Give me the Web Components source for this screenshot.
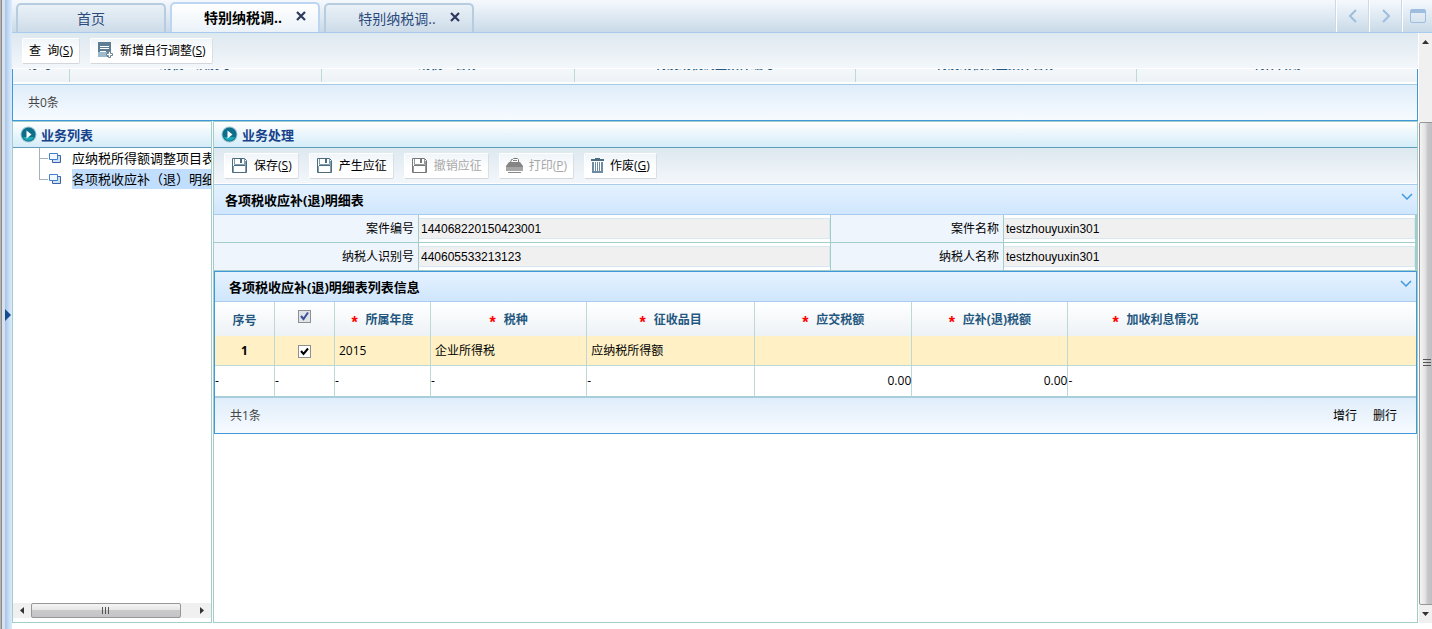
<!DOCTYPE html>
<html lang="zh-CN">
<head>
<meta charset="utf-8">
<title>特别纳税调整</title>
<style>
html, body { height: 100%; margin: 0; }
body { font: 12px/16px "Open Sans", "Noto Sans CJK SC", sans-serif; color: #000; background: #fff; overflow: hidden; }
</style>
</head>
<body>
<tax-app></tax-app>
<script>
const define = (name, html, setup) => customElements.define(name, class extends HTMLElement {
  constructor() {
    super();
    const t = document.createElement('template');
    t.innerHTML = html;
    this.attachShadow({ mode: 'open' }).append(t.content.cloneNode(true));
  }
  connectedCallback() { if (setup) setup(this, this.shadowRoot); }
});

const icons = {
  add: '<svg width="17" height="17" viewBox="0 0 17 17"><path fill="#5f7d92" d="M1 0h13v10h-3v5H1z"/><path fill="#9db9cc" d="M1 10h9v5H1z"/><path stroke="#fff" d="M3 4.500h9M3 6.500h9M3 9.500h6"/><path fill="#fff" stroke="#6d8494" d="M11.500 9.500h2v2h2v2h-2v2h-2v-2h-2v-2h2z"/></svg>',
  save: '<svg width="17" height="17" viewBox="0 0 17 17"><path d="M1.500 1.500h12l2 2v12h-14z" fill="url(#g)" stroke="var(--ic,#4c6b7c)"/><path fill="#fff" d="M4 2h9v6H4zM3 10h11v5H3z"/><path fill="var(--ic,#4c6b7c)" d="M9 2h2v4H9zM3 8h11v1H3z"/><path fill="none" stroke="var(--ic2,#7f9dae)" d="M3.500 2v5.500h10V2M2.500 9v6M14.500 4v11"/></svg>',
  print: '<svg width="17" height="17" viewBox="0 0 17 17"><path fill="#fff" stroke="#777" d="M4.500 5.500l1-3h1l1-1h4l1 1v3"/><path stroke="#888" d="M7 3.500h4"/><path fill="#858585" d="M3 5h11l3 4v5H0V9z"/><path fill="#a5a5a5" d="M0 10h17v4H0z"/><path stroke="#888" d="M2 15.500h13"/></svg>',
  trash: '<svg width="13" height="17" viewBox="0 0 13 17"><path fill="#4d6c80" d="M4 1h5v1h4v2H0V2h4z"/><path fill="#6d8ba1" d="M1 5h11v11H1z"/><path stroke="#fff" d="M3.500 5v9M5.500 5v9M7.500 5v9M9.500 5v9"/></svg>'
};

define('tool-button', `<style>
:host { display: block; }
button { height: 26px; display: flex; align-items: center; gap: 6px; padding: 0 6px; border: 1px solid #fff; border-right-color: #dadfe3; border-bottom-color: #d3d7db; border-radius: 2px; background: linear-gradient(#f0f5f9, #fff 60%); font: inherit; color: #000; white-space: nowrap; }
button:disabled { color: #a8a8a8; --ic: #777; --ic2: #999; }
.i { display: flex; } .i:empty { display: none; }
</style><button type="button"><span class="i"></span><span><slot></slot></span></button>`, (el, r) => {
  r.querySelector('.i').innerHTML = icons[el.getAttribute('icon')] || '';
  r.querySelector('button').disabled = el.hasAttribute('disabled');
});

define('tool-bar', `<style>
:host { display: flex; align-items: center; gap: 10px; height: 35px; padding: 0 10px; background: linear-gradient(#dde8ef, #f3f7fb); border-bottom: 1px solid #fff; box-sizing: content-box; }
</style><slot></slot>`);

define('page-tab', `<style>
:host { display: block; width: 150px; }
div { box-sizing: border-box; height: 29px; display: flex; align-items: center; border: 2px solid #b8cce0; border-bottom: 0; border-radius: 5px 5px 0 0; background: linear-gradient(#eaf1f7, #cddce9); color: #2c4a7c; }
:host([active]) div { height: 30px; background: linear-gradient(#fff, #eaf2f8); border-color: #bcd6f2; color: #000; font-weight: bold; }
a { flex: 1; text-align: center; color: inherit; text-decoration: none; font-size: 14px; line-height: 20px; padding-left: 0; }
:host([closable]) a { padding-left: 18px; }
button { display: none; width: 22px; padding: 0 12px 4px 0; border: 0; background: none; box-sizing: content-box; width: 10px; }
:host([closable]) button { display: block; }
svg { display: block; }
</style><div><a href="#"><slot></slot></a><button type="button" aria-label="关闭"><svg width="10" height="10" viewBox="0 0 10 10"><path stroke="#2d3a5e" stroke-width="2.200" d="M1 1l8 8M9 1l-8 8"/></svg></button></div>`);

define('tab-strip', `<style>
:host { display: flex; align-items: flex-end; justify-content: space-between; height: 32px; border-bottom: 1px solid #a8cbee; background: linear-gradient(#f5f9fd, #c9dae8); }
.tabs { display: flex; align-items: flex-end; gap: 4px; padding-left: 4px; }
.nav { display: flex; align-self: stretch; }
.nav button { width: 33px; padding: 0; border: 0; border-left: 1px solid #fff; box-shadow: -1px 0 #cdd9e5; background: none; display: grid; place-items: center; }
.nav button:last-child { width: 30px; }
svg { fill: none; stroke: #9dbede; stroke-width: 2; }
</style><div class="tabs"><slot></slot></div><div class="nav">
<button type="button" aria-label="向左"><svg width="10" height="14" viewBox="0 0 10 14"><path d="M8 1L2 7l6 6"/></svg></button>
<button type="button" aria-label="向右"><svg width="10" height="14" viewBox="0 0 10 14"><path d="M2 1l6 6-6 6"/></svg></button>
<button type="button" aria-label="窗口"><svg width="16" height="14" viewBox="0 0 16 14"><rect x=".5" y=".5" width="15" height="13" rx="1.500" stroke-width="1"/><path stroke-width="4" d="M1 2h14"/></svg></button></div>`);

define('side-splitter', `<style>
:host { flex: none; width: 12px; display: flex; align-items: center; background: linear-gradient(90deg, #b4b4b4 0 1px, #8a8a8a 1px 2px, #d9e2ec 2px 5px, #a3c4ea 5px, #c8def6 9px, #dcebfb 12px); }
button { width: 12px; height: 20px; padding: 0 0 0 5px; border: 0; background: none; }
svg { display: block; }
</style><button type="button" aria-label="展开"><svg width="6" height="12" viewBox="0 0 6 12"><path fill="#134a90" d="M0 0l6 6-6 6z"/></svg></button>`);

define('page-scrollbar', `<style>
:host { flex: none; width: 13px; display: flex; flex-direction: column; background: #f0f0f0; overflow: hidden; }
.a { height: 18px; display: grid; place-items: center; }
.gap { flex: 13 1 0; } .thumb { flex: 100 1 0; display: grid; place-items: center; border: 1px solid #979797; border-radius: 2px; margin-right: -2px; background: linear-gradient(90deg, #f5f5f5, #e2e2e2 40%, #c6c6ca 60%, #bfbfc3); }
.gap { flex: none; height: 12%; }
svg { display: block; }
</style><div class="a"><svg width="7" height="4"><path fill="#333" d="M0 4l3.500-4L7 4z"/></svg></div><div class="gap"></div><div class="thumb"><svg width="8" height="9"><path stroke="#555" d="M0 .5h8M0 3.500h8M0 6.500h8"/></svg></div><div class="a"><svg width="7" height="4"><path fill="#333" d="M0 0l3.500 4L7 0z"/></svg></div>`);

define('side-scrollbar', `<style>
:host { display: flex; height: 15px; background: #f0f0f0; }
.a { width: 18px; display: grid; place-items: center; }
.thumb { width: 150px; box-sizing: border-box; display: grid; place-items: center; border: 1px solid #979797; border-radius: 2px; background: linear-gradient(#f5f5f5, #e6e6e6 45%, #cacaca 50%, #c4c4c8); }
.gap { flex: 1; }
svg { display: block; }
</style><div class="a"><svg width="4" height="7"><path fill="#333" d="M4 0L0 3.500 4 7z"/></svg></div><div class="thumb"><svg width="9" height="7"><path stroke="#555" d="M.5 0v7M3.500 0v7M6.500 0v7"/></svg></div><div class="gap"></div><div class="a"><svg width="4" height="7"><path fill="#333" d="M0 0l4 3.500L0 7z"/></svg></div>`);

define('case-list', `<style>
:host { display: block; border: 1px solid #3f97dc; border-top: 0; }
.view { height: 13px; overflow: hidden; display: flex; flex-direction: column; justify-content: flex-end; background: #fff; }
table { width: 100%; table-layout: fixed; border-collapse: collapse; flex: none; }
th { height: 33px; box-sizing: border-box; padding: 0 0 1px; font-weight: bold; color: #24577f; border-left: 1px solid #bcd9d5; background: linear-gradient(#fff, #edf2f6); }
th:first-child { border-left: 0; }
.foot { margin-top: 2px; height: 35px; display: flex; align-items: center; padding-left: 15px; border-top: 1px solid #a8cbe6; background: linear-gradient(#dfedfa, #f7fbff); color: #444; }
</style><div class="view"><table><colgroup><col style="width:4%"><col style="width:18%"><col style="width:18%"><col style="width:20%"><col style="width:20%"><col style="width:20%"></colgroup><tr><th>序号</th><th>纳税人识别号</th><th>纳税人名称</th><th>特别纳税调整案件编号</th><th>特别纳税调整案件名称</th><th>制作日期</th></tr></table></div><div class="foot">共0条</div>`);

define('work-panel', `<style>
:host { display: flex; flex-direction: column; min-width: 0; border: 1px solid #a3cdc9; box-sizing: border-box; background: #fff; }
h2 { margin: 0; flex: none; height: 25px; display: flex; align-items: center; gap: 4px; padding-left: 7px; border-bottom: 1px solid #5f9cba; background: linear-gradient(#fff, #d4ecf9); font-size: 13px; line-height: 20px; color: #16428b; }
.body { flex: 1; min-height: 0; display: flex; flex-direction: column; }
svg { display: block; }
</style><h2><svg width="17" height="17" viewBox="0 0 17 17"><circle cx="8.500" cy="8.500" r="8" fill="#9bc4cf"/><circle cx="8.500" cy="8.500" r="7" fill="#0d6d8c"/><path fill="#19a9b5" d="M3 11a6 6 0 0 0 11 0z"/><path fill="#fff" d="M6.500 4.500l5 4-5 4z"/></svg><slot name="title"></slot></h2><div class="body"><slot></slot></div>`);

define('tree-item', `<style>
:host { display: flex; height: 21px; }
.line { flex: none; width: 8px; margin-left: 26px; border-left: 1px solid #a5b0c0; display: flex; }
:host([last]) .line { height: 11px; }
.line::after { content: ""; width: 8px; height: 10px; border-bottom: 1px solid #a5b0c0; }
svg { flex: none; margin: 4px 11px 0 1px; }
a { flex: none; height: 20px; line-height: 20px; font-size: 13px; color: #000; text-decoration: none; white-space: nowrap; }
:host([selected]) a { background: #c1deff; }
</style><span class="line"></span><svg width="12" height="12" viewBox="0 0 12 12"><path fill="#cfe0f5" stroke="#3b64a8" d="M3.500 3.500h8v7h-8z"/><path fill="#f3f8ff" stroke="#3f7fd0" d="M.5 1.500h8v6h-8z"/></svg><a href="#"><slot></slot></a>`);

define('section-bar', `<style>
:host { display: flex; align-items: center; justify-content: space-between; height: 29px; padding: 0 4px 0 11px; border-top: 1px solid #a8cbee; border-bottom: 1px solid #a8cbee; background: linear-gradient(#e5f2ff, #cfe6fd); }
:host([lined]) { border-top: 0; padding-left: 14px; }
h3 { margin: 0; font-size: 13px; line-height: 20px; }
button { padding: 0 0 6px; border: 0; background: none; }
svg { display: block; }
</style><h3><slot></slot></h3><button type="button" aria-label="收起"><svg width="12" height="7" viewBox="0 0 12 7"><path fill="none" stroke="#3f9be0" stroke-width="1.500" d="M1 1l5 5 5-5"/></svg></button>`);

define('case-form', `<style>
:host { display: grid; grid-template-columns: 205px 1fr 173px 1fr; border-right: 1px solid #a3cdc9; }
label, .f { height: 27px; border-bottom: 1px solid #a3cdc9; border-right: 1px solid #a3cdc9; }
label { display: flex; align-items: center; justify-content: flex-end; padding-right: 4px; background: #eef5fd; }
.f { display: flex; align-items: center; min-width: 0; }
.f:nth-child(4n) { border-right: 0; }
input { width: 100%; height: 21px; box-sizing: border-box; border: 1px solid #d8e8f0; border-left: 0; padding: 0 0 0 2px; margin: 0; background: #f0f0f0; font: 12px/16px "Liberation Sans", sans-serif; color: #000; border-radius: 0; }
</style><label for="a">案件编号</label><div class="f"><input id="a" value="144068220150423001" readonly></div><label for="b">案件名称</label><div class="f"><input id="b" value="testzhouyuxin301" readonly></div><label for="c">纳税人识别号</label><div class="f"><input id="c" value="440605533213123" readonly></div><label for="d">纳税人名称</label><div class="f"><input id="d" value="testzhouyuxin301" readonly></div>`);

define('detail-grid', `<style>
:host { display: block; border: 1px solid #3f97dc; }
table { width: 100%; table-layout: fixed; border-collapse: separate; border-spacing: 0; }
th, td { box-sizing: border-box; padding: 0; border-right: 1px solid #bcd9d5; text-align: left; }
th:last-child, td:last-child { border-right: 0; }
thead tr { background: linear-gradient(#fff, #edf2f6); }
thead th { height: 34px; padding-top: 3px; color: #24577f; text-align: center; }
thead i { color: #f00; font: bold 12px/12px "Liberation Sans", sans-serif; margin-right: 8px; display: inline-block; vertical-align: -4px; font-size: 16px; }
.row { background: #fff1c5; }
.row > * { height: 30px; padding-left: 4px; border-bottom: 1px solid #bcd9d5; }
.row > th, .row > .c { padding: 0; text-align: center; }
.sum td { height: 31px; border-bottom: 1px solid #a9cfcf; }
.sum td.n { text-align: right; }
input { appearance: none; display: inline-block; width: 13px; height: 13px; margin: 0; vertical-align: middle; border: 1px solid #8e8f8f; background: #fff url('data:image/svg+xml,<svg xmlns="http://www.w3.org/2000/svg" width="11" height="11"><path fill="none" stroke="black" stroke-width="2" d="M2 5l2.500 3L9 2.500"/></svg>') center no-repeat; }
thead input { margin-bottom: 8px; background: #dfe3ea url('data:image/svg+xml,<svg xmlns="http://www.w3.org/2000/svg" width="11" height="11"><path fill="none" stroke="rgb(60,80,150)" stroke-width="2" d="M2 5l2.500 3L9 1.500"/></svg>') center no-repeat; }
.foot { height: 35px; display: flex; justify-content: space-between; padding: 0 19px 0 15px; border-top: 1px solid #a8cbe6; background: linear-gradient(#dfedfa, #f7fbff); color: #444; line-height: 36px; }
.act { display: flex; gap: 16px; }
.act button { border: 0; padding: 0 0 10px; background: none; font: inherit; color: #000; }
</style><section-bar lined>各项税收应补(退)明细表列表信息</section-bar>
<table><colgroup><col style="width:60px"><col style="width:60px"><col style="width:96px"><col style="width:13%"><col style="width:14%"><col style="width:157px"><col style="width:13%"><col></colgroup>
<thead><tr><th>序号</th><th><input type="checkbox" checked aria-label="全选"></th><th><i>*</i>所属年度</th><th><i>*</i>税种</th><th><i>*</i>征收品目</th><th><i>*</i>应交税额</th><th><i>*</i>应补(退)税额</th><th class="last"><i>*</i>加收利息情况</th></tr></thead>
<tbody><tr class="row"><th>1</th><td class="c"><input type="checkbox" checked aria-label="选择第1行"></td><td>2015</td><td>企业所得税</td><td>应纳税所得额</td><td></td><td></td><td></td></tr>
<tr class="sum"><td>-</td><td>-</td><td>-</td><td>-</td><td>-</td><td class="n">0.00</td><td class="n">0.00</td><td>-</td></tr></tbody></table>
<div class="foot"><span>共1条</span><span class="act"><button type="button">增行</button><button type="button">删行</button></span></div>
<style>thead th.last { text-align: left; padding-left: 44px; }</style>`);

define('tax-app', `<style>
:host { display: flex; height: 100vh; }
.main { flex: 1; min-width: 0; display: flex; flex-direction: column; padding-bottom: 6px; }
.frame { flex: 1; min-height: 0; display: flex; }
.content { flex: 1; min-width: 0; display: flex; flex-direction: column; margin-right: 1px; }
.panels { flex: 1; min-height: 0; display: grid; grid-template-columns: 200px 1fr; gap: 1px; }
.tree { flex: 1; overflow: hidden; }
side-scrollbar { margin-bottom: 4px; }
work-panel tool-bar { height: 35px; }
</style><side-splitter></side-splitter><div class="main">
<tab-strip><page-tab>首页</page-tab><page-tab active closable>特别纳税调..</page-tab><page-tab closable>特别纳税调..</page-tab></tab-strip>
<div class="frame"><div class="content">
<tool-bar><tool-button>查&nbsp; 询(<u>S</u>)</tool-button><tool-button icon="add">新增自行调整(<u>S</u>)</tool-button></tool-bar>
<case-list></case-list>
<div class="panels">
<work-panel><span slot="title">业务列表</span><div class="tree"><tree-item>应纳税所得额调整项目表</tree-item><tree-item last selected>各项税收应补（退）明细表</tree-item></div><side-scrollbar></side-scrollbar></work-panel>
<work-panel><span slot="title">业务处理</span>
<tool-bar><tool-button icon="save">保存(<u>S</u>)</tool-button><tool-button icon="save">产生应征</tool-button><tool-button icon="save" disabled>撤销应征</tool-button><tool-button icon="print" disabled>打印(<u>P</u>)</tool-button><tool-button icon="trash">作废(<u>G</u>)</tool-button></tool-bar>
<section-bar>各项税收应补(退)明细表</section-bar><case-form></case-form><detail-grid></detail-grid></work-panel>
</div></div><page-scrollbar></page-scrollbar></div></div>`);
</script>
</body>
</html>
